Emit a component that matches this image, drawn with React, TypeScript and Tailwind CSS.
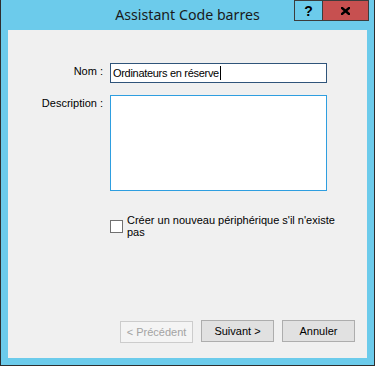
import React from "react";

export default function App() {
  const ui = { fontFamily: '"Liberation Sans", Arial, sans-serif' };
  return (
    <div
      className="w-[375px] h-[366px] bg-[#6ccbeb] border-x border-b border-[#2e2e2e] flex flex-col"
      style={ui}
    >
      {/* Title bar */}
      <div className="h-[30px] grid grid-cols-[1fr_auto_1fr] shrink-0">
        <div />
        <div
          className="pt-[5px] text-[14.2px] leading-[20px] text-[#1a1a1a]"
          style={{ fontFamily: '"Noto Sans", "Open Sans", sans-serif' }}
        >
          Assistant Code barres
        </div>
        <div className="flex justify-end items-start pr-[5px]">
          <div className="w-[29px] h-[21px] border border-[#3c3c3c] bg-[#6ccbeb] flex items-center justify-center text-[14px] font-bold text-black leading-none">
            ?
          </div>
          <div className="-ml-px w-[47px] h-[21px] border border-[#3c3c3c] bg-[#c75050] flex items-center justify-center text-black">
            <svg width="9" height="8" viewBox="0 0 9 8">
              <path d="M1 1 L8 7 M8 1 L1 7" stroke="#000" strokeWidth="2.4" strokeLinecap="square" />
            </svg>
          </div>
        </div>
      </div>

      {/* Client area */}
      <div className="ml-[7px] w-[359px] h-[328px] bg-[#f0f0f0] flex flex-col pt-[33px] pb-[15px] text-[11px] leading-[13px] text-black">
        <div className="grid grid-cols-[95px_217px] gap-x-[7px] gap-y-[12px]">
          <div className="text-right pt-[2px]">Nom :</div>
          <div className="h-[20px] border border-[#2f547a] bg-white flex items-center pl-[2px]">
            <span className="tracking-[-0.3px]">Ordinateurs en réserve</span>
            <span className="ml-[1px] w-px h-[14px] bg-black" />
          </div>
          <div className="text-right pt-[2px]">Description :</div>
          <div className="h-[96px] border border-[#2e9ee0] bg-white" />
        </div>

        <div className="ml-[102px] mt-[23px] flex items-center gap-[4px]">
          <div className="w-[13px] h-[13px] border border-[#707070] bg-white shrink-0 mt-[1px]" />
          <div className="leading-[12px]">
            Créer un nouveau périphérique s'il n'existe
            <br />
            pas
          </div>
        </div>

        <div className="flex-1" />

        <div className="flex justify-end items-start gap-[8px] pr-[12px]">
          <div className="mt-[1px] w-[73px] h-[22px] border border-[#cccccc] bg-[#f4f4f4] text-[#a3a3a3] flex items-center justify-center">
            &lt; Précédent
          </div>
          <div className="w-[73px] h-[22px] border border-[#adadad] bg-[#e1e1e1] flex items-center justify-center">
            Suivant &gt;
          </div>
          <div className="w-[73px] h-[22px] border border-[#adadad] bg-[#e1e1e1] flex items-center justify-center">
            Annuler
          </div>
        </div>
      </div>
    </div>
  );
}
